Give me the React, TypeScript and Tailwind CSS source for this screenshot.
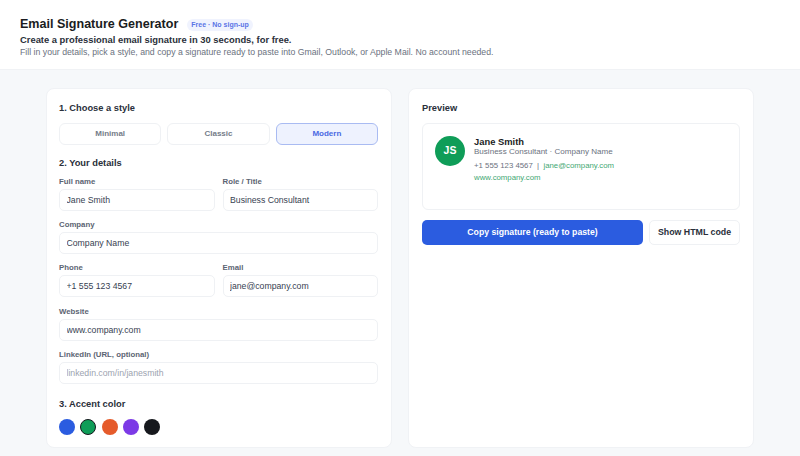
const font = "[font-family:'Liberation_Sans',Arial,sans-serif]";

function Field({ label, value, placeholder }: { label: string; value?: string; placeholder?: string }) {
  return (
    <label className="block min-w-0 flex-1">
      <span className="mb-[2px] block text-[7.8px] leading-[11px] font-bold text-[#5b6472]">{label}</span>
      <input
        readOnly
        value={value}
        placeholder={placeholder}
        className="block h-[22px] w-full rounded-[5px] border border-[#eff1f4] bg-white px-[6.5px] text-[8.7px] text-[#374151] outline-none placeholder:text-[#9ca3af]"
      />
    </label>
  );
}

export default function App() {
  const colors = ["#2b5ce0", "#0f9d58", "#e55b2b", "#7c3ae6", "#16181d"];

  return (
    <div className={`${font} flex h-[456px] flex-col overflow-hidden bg-[#f6f8fa]`}>
      <header className="h-[70px] shrink-0 border-b border-[#f0f2f5] bg-white px-5 pt-[16px]">
        <div className="flex items-center gap-[9px]">
          <h1 className="text-[12.55px] leading-[17px] font-semibold text-[#1a1c21]">Email Signature Generator</h1>
          <span className="rounded-full bg-[#f0f3fe] px-[4px] text-[7px] leading-[12px] font-bold text-[#5a74e6]">Free · No sign-up</span>
        </div>
        <p className="text-[9.4px] leading-[13px] font-bold text-[#2a2f3a]">Create a professional email signature in 30 seconds, for free.</p>
        <p className="text-[8.73px] leading-[12px] text-[#6b7280]">Fill in your details, pick a style, and copy a signature ready to paste into Gmail, Outlook, or Apple Mail. No account needed.</p>
      </header>

      <main className="mx-auto flex w-[708px] flex-1 gap-4 pt-[18px] pb-[8px]">
        {/* Form card */}
        <section className="w-[346px] rounded-[8px] border border-[#f0f2f5] bg-white pt-[13px] pr-[13px] pl-[12px]">
          <h2 className="text-[9.3px] leading-[13px] font-bold text-[#2a2f3a]">1. Choose a style</h2>
          <div className="mt-[8px] grid grid-cols-3 gap-[6px]">
            <button className="h-[22px] rounded-[6px] border border-[#eff1f4] bg-white text-[8px] font-bold text-[#757c89]">Minimal</button>
            <button className="h-[22px] rounded-[6px] border border-[#eff1f4] bg-white text-[8px] font-bold text-[#757c89]">Classic</button>
            <button className="h-[22px] rounded-[6px] border border-[#a9bbf2] bg-[#eef2fe] text-[8px] font-bold text-[#4a69e2]">Modern</button>
          </div>

          <h2 className="mt-[12px] text-[9.3px] leading-[13px] font-bold text-[#2a2f3a]">2. Your details</h2>
          <div className="mt-[6px] flex flex-col gap-[8.2px]">
            <div className="flex gap-2">
              <Field label="Full name" value="Jane Smith" />
              <Field label="Role / Title" value="Business Consultant" />
            </div>
            <Field label="Company" value="Company Name" />
            <div className="flex gap-2">
              <Field label="Phone" value="+1 555 123 4567" />
              <Field label="Email" value="jane@company.com" />
            </div>
            <Field label="Website" value="www.company.com" />
            <Field label="LinkedIn (URL, optional)" placeholder="linkedin.com/in/janesmith" />
          </div>

          <h2 className="mt-[14px] text-[9.3px] leading-[13px] font-bold text-[#2a2f3a]">3. Accent color</h2>
          <div className="mt-[8px] flex gap-[5.33px]">
            {colors.map((c, i) => (
              <span
                key={c}
                className={i === 1 ? "size-4 rounded-full border border-[#16181d]" : "size-4 rounded-full"}
                style={{ backgroundColor: c }}
              />
            ))}
          </div>
        </section>

        {/* Preview card */}
        <section className="w-[346px] rounded-[8px] border border-[#f0f2f5] bg-white px-[13px] pt-[13px]">
          <h2 className="text-[9.3px] leading-[13px] font-bold text-[#2a2f3a]">Preview</h2>
          <div className="mt-[8px] flex h-[86.5px] gap-[9px] rounded-[6px] border border-[#eff1f4] bg-white px-[12px] pt-[11.5px]">
            <div className="flex size-[30px] shrink-0 items-center justify-center rounded-full bg-[#0f9d58] text-[10.5px] font-bold text-white">JS</div>
            <div className="min-w-0">
              <div className="text-[9.4px] leading-[11px] font-bold text-[#1a1d24]">Jane Smith</div>
              <div className="text-[8.05px] leading-[9px] text-[#6b7280]">Business Consultant · Company Name</div>
              <div className="mt-[4px] text-[7.8px] leading-[12px] text-[#6b7280]">
                +1 555 123 4567 &nbsp;|&nbsp; <span className="text-[#3fa873]">jane@company.com</span>
              </div>
              <div className="mt-[0.5px] text-[7.8px] leading-[12px] text-[#3fa873]">www.company.com</div>
            </div>
          </div>
          <div className="mt-[10.5px] flex gap-[6px]">
            <button className="h-[25px] flex-1 rounded-[5px] bg-[#2b5ce0] text-[8.7px] font-bold text-white">Copy signature (ready to paste)</button>
            <button className="h-[25px] w-[91px] rounded-[5px] border border-[#eff1f4] bg-white text-[8.8px] font-bold text-[#2a2f3a]">Show HTML code</button>
          </div>
        </section>
      </main>
    </div>
  );
}
